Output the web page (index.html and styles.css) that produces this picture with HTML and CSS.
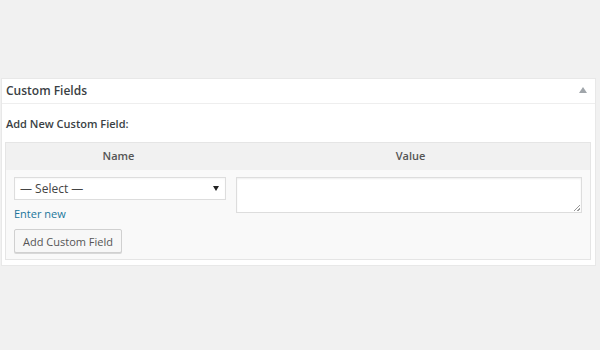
FILE: index.html
```html
<!DOCTYPE html>
<html>
<head>
<meta charset="utf-8">
<link rel="stylesheet" href="styles.css">
</head>
<body>
<div class="postbox">
  <div class="postbox-header">
    <h2 class="hndle">Custom Fields</h2>
    <span class="toggle"></span>
  </div>
  <div class="inside">
    <p class="add-new">Add New Custom Field:</p>
    <div class="meta-table">
      <div class="thead">
        <div class="col-name">Name</div>
        <div class="col-value">Value</div>
      </div>
      <div class="tbody">
        <div class="col-name">
          <div class="select"><span>— Select —</span><span class="arrow"></span></div>
          <a class="enter-new" href="#">Enter new</a>
          <button class="button">Add Custom Field</button>
        </div>
        <div class="col-value">
          <div class="textarea"><span class="grip"></span></div>
        </div>
      </div>
    </div>
  </div>
</div>
</body>
</html>
```
FILE: styles.css
```css
html, body {
  margin: 0;
  padding: 0;
  background: #f1f1f1;
  font-family: "Open Sans", "Liberation Sans", sans-serif;
  color: #32373c;
}
.postbox {
  margin: 78px 0 0 1px;
  width: 593px;
  background: #fff;
  border: 1px solid #e8e8e8;
  box-sizing: content-box;
  padding-bottom: 5px;
}
.postbox-header {
  display: flex;
  align-items: center;
  justify-content: space-between;
  height: 24px;
  border-bottom: 1px solid #eeeeee;
  padding: 0 8px 0 4px;
}
.hndle {
  margin: 0;
  font-size: 12px;
  font-weight: 600;
  color: #3a3f44;
  line-height: 22px;
}
.toggle {
  width: 0;
  height: 0;
  border-left: 4px solid transparent;
  border-right: 4px solid transparent;
  border-bottom: 6px solid #a0a5aa;
  margin-top: -2px;
}
.inside {
  padding: 0 4px 0 3px;
}
.add-new {
  margin: 0;
  padding: 13px 0 0 1px;
  height: 25px;
  font-size: 11px;
  font-weight: 600;
  color: #3a3f44;
  line-height: 14px;
}
.meta-table {
  border: 1px solid #e5e5e5;
  background: #f9f9f9;
}
.thead {
  display: flex;
  background: #f1f1f1;
  height: 27px;
  font-size: 11px;
  font-weight: 600;
  color: #555;
  line-height: 26px;
  text-align: center;
}
.thead .col-name { width: 225px; }
.thead .col-value { flex: 1; }
.tbody {
  display: flex;
  padding: 7px 0 6px;
}
.tbody .col-name {
  width: 212px;
  padding: 0 5px 0 8px;
  display: flex;
  flex-direction: column;
  align-items: flex-start;
}
.tbody .col-value {
  flex: 1;
  padding: 0 8px 0 5px;
}
.select {
  box-sizing: border-box;
  width: 212px;
  height: 23px;
  background: #fff;
  border: 1px solid #dddddd;
  box-shadow: inset 0 1px 2px rgba(0,0,0,0.04);
  display: flex;
  align-items: center;
  justify-content: space-between;
  padding: 0 6px 0 5px;
  font-size: 12px;
  color: #444;
}
.arrow {
  width: 0;
  height: 0;
  border-left: 3px solid transparent;
  border-right: 3px solid transparent;
  border-top: 5px solid #222;
}
.enter-new {
  margin-top: 6px;
  font-size: 11px;
  line-height: 16px;
  color: #21759b;
  text-decoration: none;
}
.button {
  margin-top: 7px;
  box-sizing: border-box;
  height: 24px;
  width: 108px;
  padding: 0;
  background: #f7f7f7;
  border: 1px solid #d0d0d0;
  border-radius: 2px;
  box-shadow: 0 1px 0 #d8d8d8;
  font-family: "Open Sans", "Liberation Sans", sans-serif;
  font-size: 11px;
  color: #555;
}
.textarea {
  position: relative;
  box-sizing: border-box;
  height: 36px;
  background: #fff;
  border: 1px solid #dddddd;
  box-shadow: inset 0 1px 2px rgba(0,0,0,0.07);
}
.grip {
  position: absolute;
  right: 1px;
  bottom: 1px;
  width: 6px;
  height: 6px;
  background: linear-gradient(135deg, transparent 45%, #999 45%, #999 55%, transparent 55%, transparent 75%, #999 75%, #999 85%, transparent 85%);
}
```
